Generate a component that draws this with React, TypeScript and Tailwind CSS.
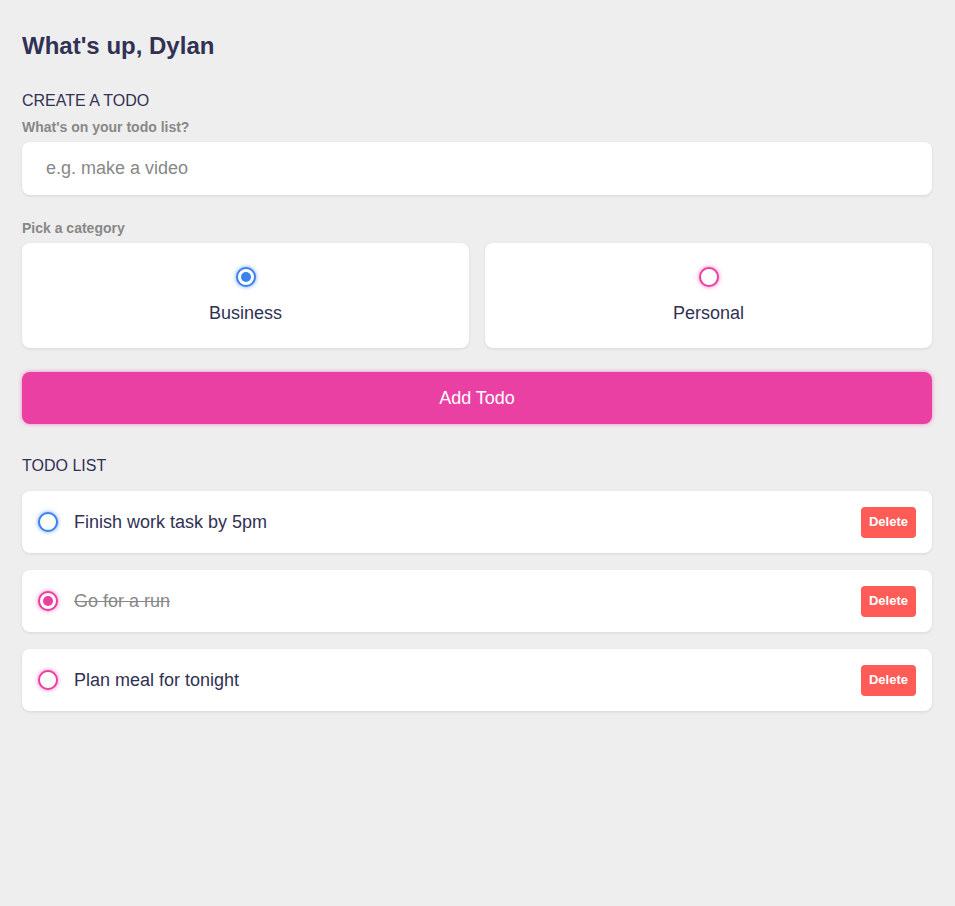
import { useState } from "react";

type Todo = { id: number; content: string; category: "business" | "personal"; done: boolean };

const initialTodos: Todo[] = [
  { id: 1, content: "Finish work task by 5pm", category: "business", done: false },
  { id: 2, content: "Go for a run", category: "personal", done: true },
  { id: 3, content: "Plan meal for tonight", category: "personal", done: false },
];

function Bubble({ category, checked }: { category: "business" | "personal"; checked: boolean }) {
  const ring =
    category === "business"
      ? "border-[#3a82ee] shadow-[0_0_4px_rgba(58,130,238,0.75)]"
      : "border-[#ea40a4] shadow-[0_0_4px_rgba(234,64,164,0.75)]";
  const dot = category === "business" ? "bg-[#3a82ee]" : "bg-[#ea40a4]";
  return (
    <span className={`flex h-5 w-5 shrink-0 items-center justify-center rounded-full border-2 bg-white ${ring}`}>
      {checked && <span className={`h-[10px] w-[10px] rounded-full ${dot}`} />}
    </span>
  );
}

export default function App() {
  const [todos, setTodos] = useState(initialTodos);
  const [category, setCategory] = useState<"business" | "personal">("business");

  return (
    <div
      className="min-h-[906px] bg-[#eeeeee] pr-[23px] pl-[22px] pt-[32px] text-[#313154]"
      style={{ fontFamily: '"Liberation Sans", Arial, sans-serif' }}
    >
      <h2 className="text-2xl leading-7 font-bold">What's up, Dylan</h2>

      <h3 className="mt-[31px] text-base leading-5 uppercase">Create a todo</h3>
      <h4 className="mt-2 text-sm leading-4 font-bold text-[#888888]">What's on your todo list?</h4>
      <input
        type="text"
        placeholder="e.g. make a video"
        className="mt-[7px] block h-[53px] w-full rounded-lg bg-white px-6 text-lg text-[#313154] shadow-[0_1px_3px_rgba(0,0,0,0.1)] outline-none placeholder:text-[#888888]"
      />

      <h4 className="mt-[25px] text-sm leading-4 font-bold text-[#888888]">Pick a category</h4>
      <div className="mt-[7px] grid grid-cols-2 gap-4">
        {(["business", "personal"] as const).map((c) => (
          <label
            key={c}
            onClick={() => setCategory(c)}
            className="flex h-[105px] cursor-pointer flex-col items-center rounded-lg bg-white pt-6 shadow-[0_1px_3px_rgba(0,0,0,0.1)]"
          >
            <Bubble category={c} checked={category === c} />
            <span className="mt-[15px] text-lg leading-[22px] capitalize">{c}</span>
          </label>
        ))}
      </div>

      <button className="mt-6 block h-[52px] w-full rounded-lg bg-[#ea40a4] text-lg text-white shadow-[0_0_4px_rgba(234,64,164,0.6)]">
        Add Todo
      </button>

      <h3 className="mt-[32px] text-base leading-5 uppercase">Todo list</h3>
      <div className="mt-[15px] flex flex-col gap-[17px]">
        {todos.map((t) => (
          <div
            key={t.id}
            className="flex h-[62px] items-center rounded-lg bg-white px-4 shadow-[0_1px_3px_rgba(0,0,0,0.1)]"
          >
            <button
              onClick={() => setTodos(todos.map((x) => (x.id === t.id ? { ...x, done: !x.done } : x)))}
              className="flex"
            >
              <Bubble category={t.category} checked={t.done} />
            </button>
            <span
              className={`ml-4 flex-1 text-lg ${t.done ? "text-[#888888] line-through" : "text-[#313154]"}`}
            >
              {t.content}
            </span>
            <button
              onClick={() => setTodos(todos.filter((x) => x.id !== t.id))}
              className="h-[31px] w-[55px] rounded bg-[#ff5b57] text-[13px] font-semibold text-white"
            >
              Delete
            </button>
          </div>
        ))}
      </div>
    </div>
  );
}
